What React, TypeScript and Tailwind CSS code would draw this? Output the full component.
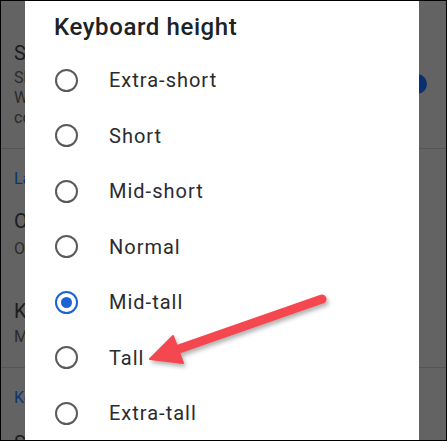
import React from 'react';

const options = ['Extra-short', 'Short', 'Mid-short', 'Normal', 'Mid-tall', 'Tall', 'Extra-tall'];
const selected = 'Mid-tall';

const Radio: React.FC<{ checked: boolean }> = ({ checked }) => (
  <div
    className={`w-[23px] h-[23px] rounded-full border-[2.5px] flex items-center justify-center ${
      checked ? 'border-[#1a62d6]' : 'border-[#5a5a5a]'
    }`}
  >
    {checked && <div className="w-[11px] h-[11px] rounded-full bg-[#1a62d6]" />}
  </div>
);

// dimmed settings page behind the dialog, only a strip of it shows
const Background: React.FC = () => (
  <div className="relative font-['Roboto',sans-serif]">
    <div className="w-[24px] pl-[13px] overflow-hidden whitespace-nowrap">
      <div className="pt-[40px] text-[20px] leading-[24px] text-[#1c1c1c]">Show language switch key</div>
      <div className="mt-[3px] text-[16px] leading-[20px] text-[#2a2a2a]">
        <div>Show a key</div>
        <div>When more</div>
        <div>configured</div>
      </div>
    </div>
    <div className="absolute right-[19px] top-[73px] w-[20px] h-[20px] rounded-full bg-[#0a2e6e]" />
    <div className="mt-[20px] h-px bg-[#555555]" />
    <div className="w-[24px] pl-[13px] overflow-hidden whitespace-nowrap">
      <div className="pt-[20px] text-[16px] leading-[20px] text-[#0b3473]">Layout</div>
      <div className="mt-[20px] text-[20px] leading-[24px] text-[#1c1c1c]">One-handed mode</div>
      <div className="mt-[6px] text-[16px] leading-[20px] text-[#2a2a2a]">Off</div>
      <div className="mt-[40px] text-[20px] leading-[24px] text-[#1c1c1c]">Keyboard height</div>
      <div className="mt-[4px] text-[16px] leading-[20px] text-[#2a2a2a]">Mid-tall</div>
    </div>
    <div className="mt-[20px] h-px bg-[#555555]" />
    <div className="w-[24px] pl-[13px] overflow-hidden whitespace-nowrap">
      <div className="pt-[20px] text-[16px] leading-[20px] text-[#0b3473]">Key press</div>
      <div className="mt-[23px] text-[20px] leading-[24px] text-[#1c1c1c]">Sound</div>
    </div>
  </div>
);

const Arrow: React.FC = () => (
  <svg
    className="absolute left-0 top-0 pointer-events-none"
    width="447"
    height="441"
    viewBox="0 0 447 441"
    style={{ filter: 'drop-shadow(2px 3px 2px rgba(0,0,0,0.3))' }}
  >
    <line x1="321" y1="298" x2="172" y2="350" stroke="#f5474f" strokeWidth="9" strokeLinecap="round" />
    <polygon points="149,358 172,335 182,362" fill="#f5474f" stroke="#f5474f" strokeWidth="2" strokeLinejoin="round" />
  </svg>
);

export default function App() {
  return (
    <div className="w-[447px] h-[441px] relative overflow-hidden border border-black bg-[#636363]">
      <Background />
      <div className="absolute left-[24px] top-0 w-[394px] h-[460px] bg-white font-['Roboto',sans-serif]">
        <div className="h-[51.25px] pt-[12px] pl-[29px] text-[24px] leading-[28px] font-medium text-[#202124] tracking-[0.6px]">
          Keyboard height
        </div>
        {options.map((o) => (
          <div key={o} className="h-[55.5px] flex items-center">
            <div className="w-[84px] pl-[30px] flex items-center">
              <Radio checked={o === selected} />
            </div>
            <span className="text-[20px] text-[#2a2b2e] tracking-[1px]">{o}</span>
          </div>
        ))}
      </div>
      <Arrow />
    </div>
  );
}
